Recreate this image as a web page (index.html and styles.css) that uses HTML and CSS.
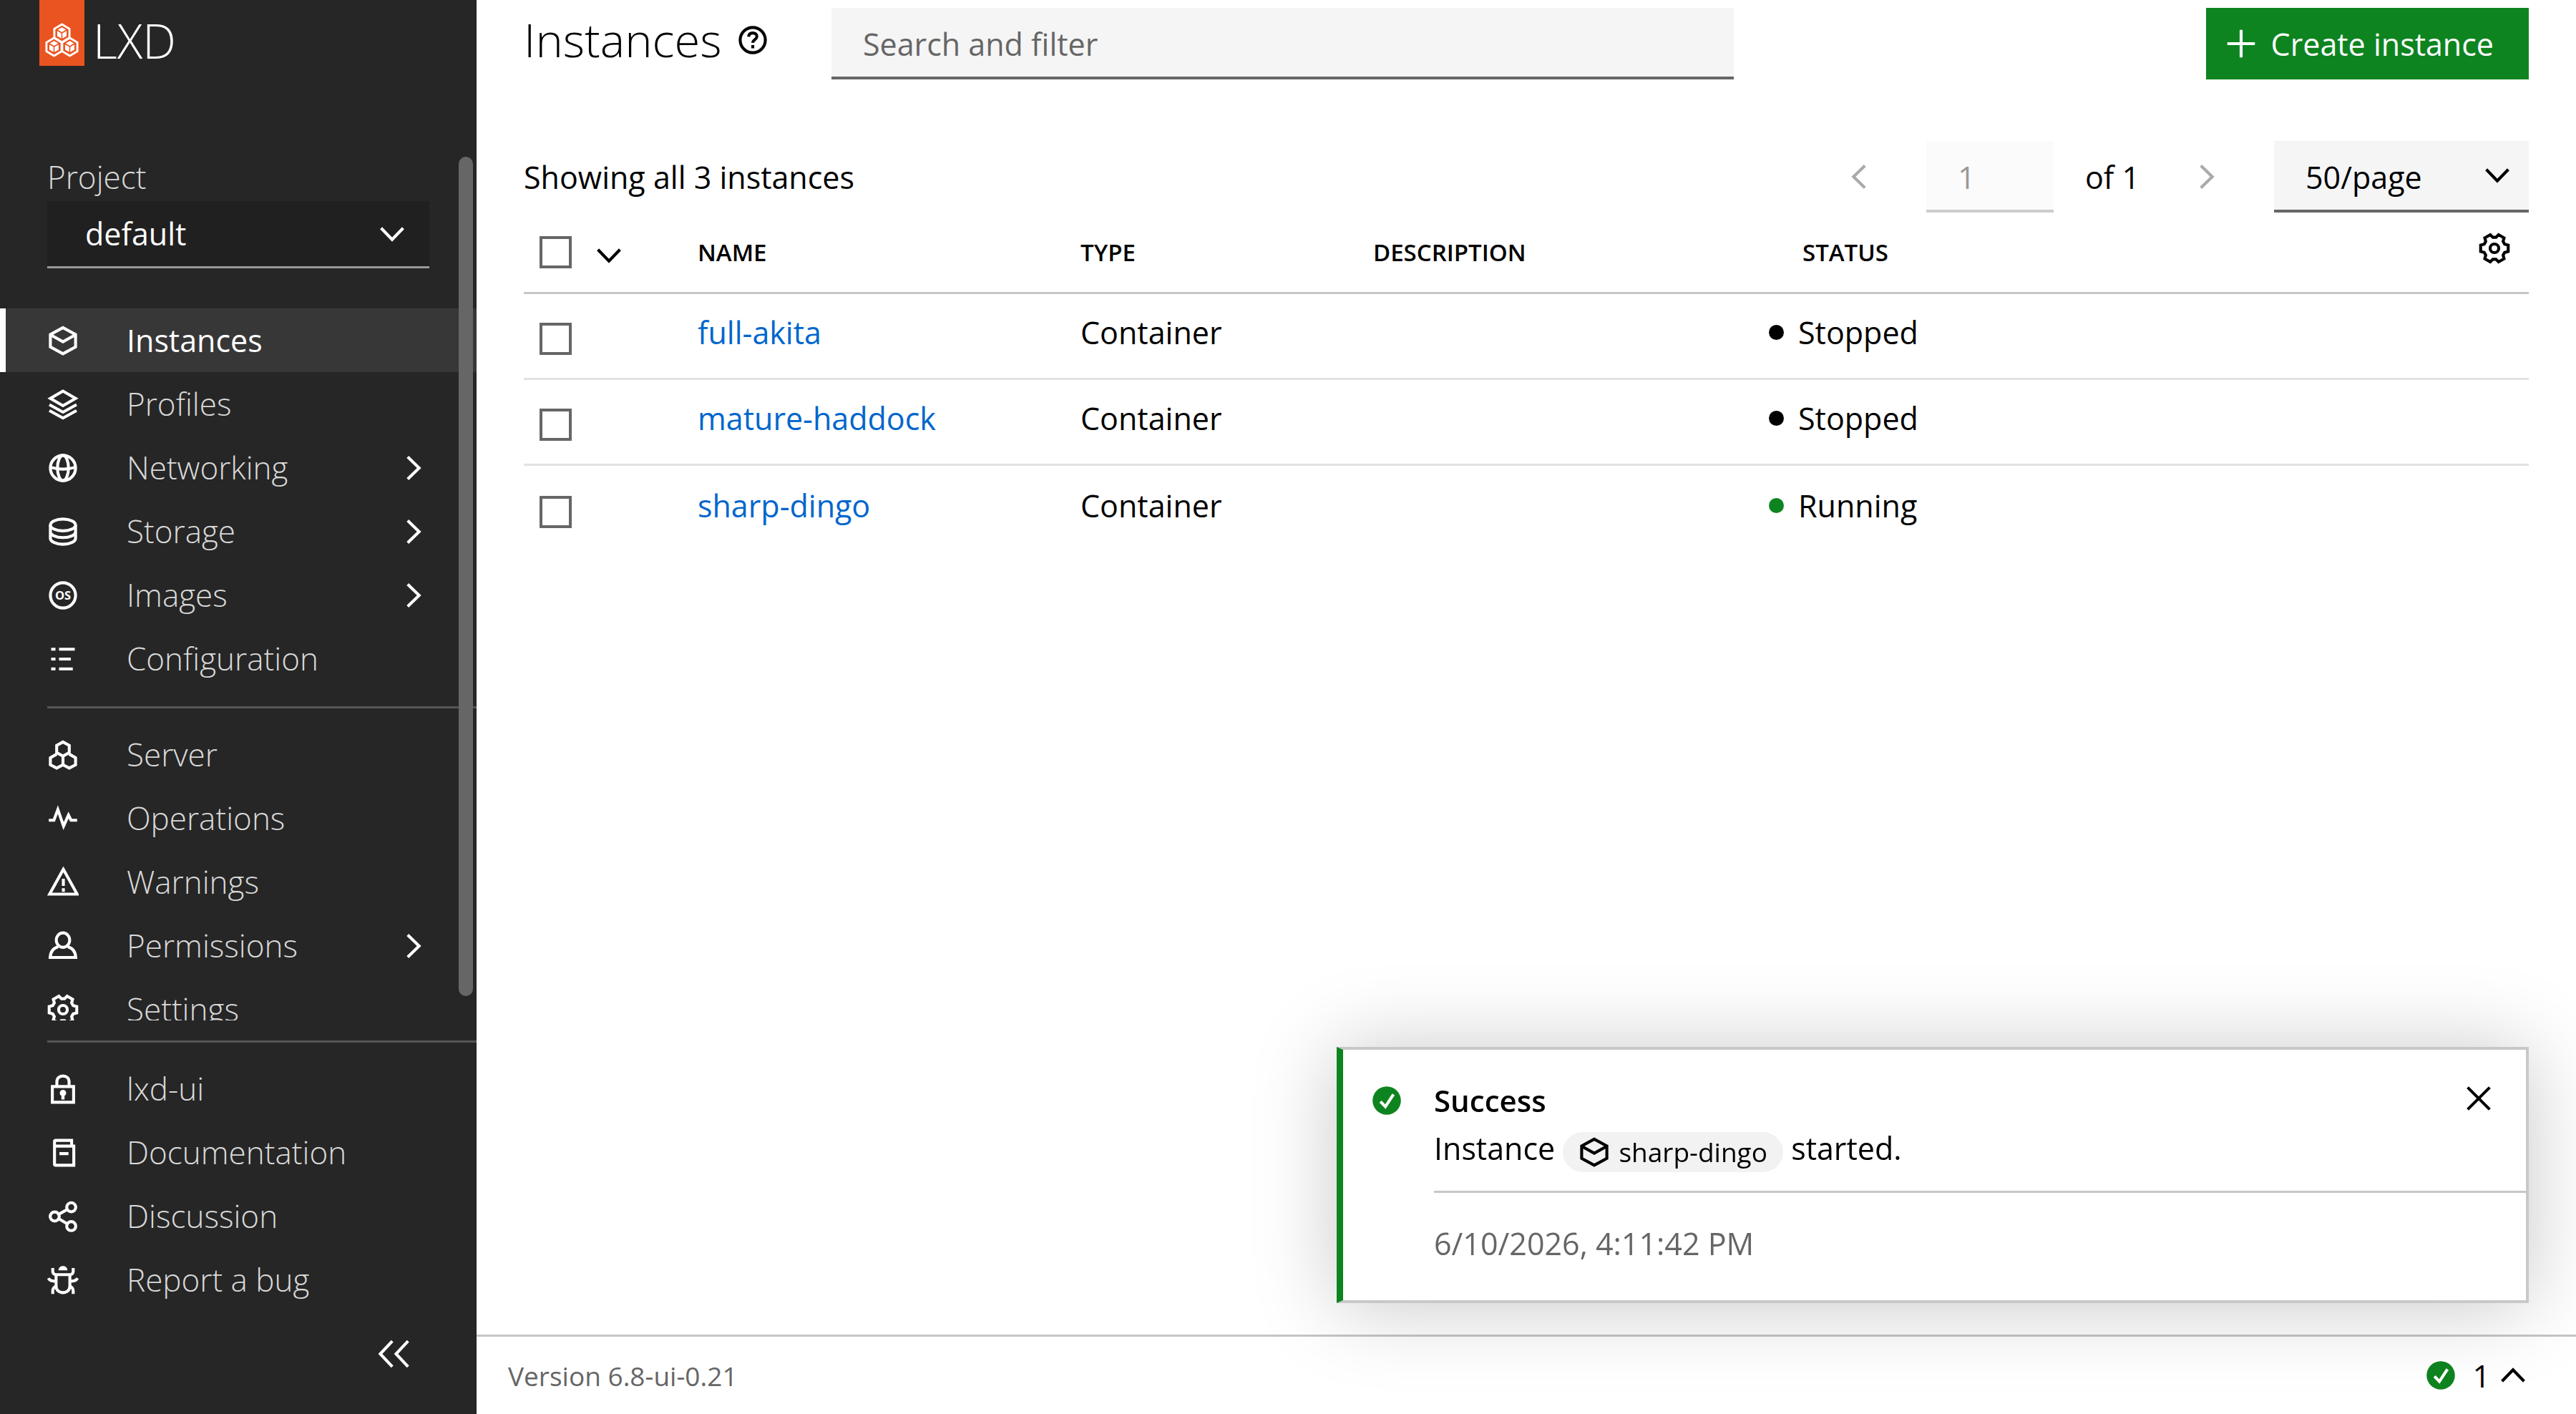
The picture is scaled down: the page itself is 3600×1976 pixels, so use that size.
FILE: index.html
```html
<!DOCTYPE html>
<html lang="en">
<head>
    <meta charset="UTF-8" />
    <meta name="viewport" content="width=device-width, initial-scale=1" />
    <title>Instances | LXD UI</title>
    <link rel="stylesheet" href="styles.css">
</head>
<body>

<!-- Icon set -->
<svg class="sprite" aria-hidden="true">
    <symbol id="i-cube" viewBox="0 0 16 16"><path d="M8 1.4 1.6 4.9v6.3L8 14.7l6.4-3.5V4.9zM1.6 5 8 8.6 14.4 5" /></symbol>
    <symbol id="i-layers" viewBox="0 0 16 16"><path d="M8 1.3 1.6 5 8 8.7 14.4 5zM1.1 8.2 8 12l6.9-3.8M1.1 11.2 8 15l6.9-3.8" /></symbol>
    <symbol id="i-globe" viewBox="0 0 16 16"><circle cx="8" cy="8" r="6.4" /><ellipse cx="8" cy="8" rx="2.8" ry="6.4" /><path d="M1.6 7.6q6.4 2 12.8 0" /></symbol>
    <symbol id="i-storage" viewBox="0 0 16 16"><ellipse cx="8" cy="4.6" rx="6.4" ry="3" /><path d="M1.6 4.6v6.8c0 1.7 2.9 3 6.4 3s6.4-1.3 6.4-3V4.6M1.6 8c0 1.7 2.9 3 6.4 3s6.4-1.3 6.4-3" /></symbol>
    <symbol id="i-list" viewBox="0 0 16 16"><path d="M2 3h2.2M6 3h8M2 8h2.2M6 8h6M2 13h2.2M6 13h7" /></symbol>
    <symbol id="i-hexes" viewBox="0 0 16 16"><path d="M8 1.4 4.8 3.2v3.6L8 8.6l3.2-1.8V3.2zM4.8 7.6 1.6 9.4V13l3.2 1.7L8 13V9.2M11.2 7.6l3.2 1.8V13l-3.2 1.7L8 13" /></symbol>
    <symbol id="i-pulse" viewBox="0 0 16 16"><path d="M.8 8.8h2.6l2-5.4 2.9 8.4 2.5-5.6 1.3 2.6h3.1" /></symbol>
    <symbol id="i-warning" viewBox="0 0 16 16"><path d="M8.2 1.4 1.2 14h14zM8.2 6.2v3.6M8.2 11v1.8" /></symbol>
    <symbol id="i-user" viewBox="0 0 16 16"><ellipse cx="8" cy="5" rx="3.4" ry="3.7" /><path d="M5.6 8.4C3.2 9 1.7 11 1.5 13.8h13c-.2-2.8-1.7-4.8-4.1-5.4" /></symbol>
    <symbol id="i-gear" viewBox="0 0 16 16"><path d="M15 9.6l-1.8.5-.8 1.4.5 1.8-2.8 1.6-1.3-1.3H7.2l-1.3 1.3-2.8-1.6.5-1.8-.8-1.4L1 9.6V6.4l1.8-.5.8-1.4-.5-1.8 2.8-1.6 1.3 1.3h1.6l1.3-1.3 2.8 1.6-.5 1.8.8 1.4 1.8.5z" /><circle cx="8" cy="8" r="2.2" /></symbol>
    <symbol id="i-lock" viewBox="0 0 16 16"><path d="M2.6 6.7h10.8v8H2.6zM4.9 6.700V4.3C4.9 2.4 6.2 1.3 8 1.3s3.1 1.1 3.1 3v2.4" /><path class="solid" d="M8 8.4a1.6 1.6 0 0 0-.8 3v1.9h1.6v-1.9a1.6 1.6 0 0 0-.8-3z" /></symbol>
    <symbol id="i-book" viewBox="0 0 16 16"><path d="M12.4 4V1.7H4.3c-.4 0-.6.2-.6.6v11.4c0 .4.2.6.6.6h9.2V4.6H3.7M6.2 8.4h4.6" /></symbol>
    <symbol id="i-share" viewBox="0 0 16 16"><circle cx="3.8" cy="8" r="2.3" /><circle cx="12.2" cy="3.3" r="2.3" /><circle cx="12.2" cy="12.9" r="2.3" /><path d="m5.8 6.900 4.4-2.5M5.8 9.1l4.4 2.6" /></symbol>
    <symbol id="i-bug" viewBox="0 0 16 16"><path d="M4.5 5.2h7v5.6c0 2.2-1.4 3.5-3.5 3.5s-3.5-1.3-3.5-3.5zM2.8 1.8v1.6c0 1 .6 1.8 1.7 1.8M13.2 1.8v1.6c0 1-.6 1.8-1.7 1.8M.6 7c.6 1.2 1.8 1.6 3.9 1.6M15.4 7c-.6 1.2-1.8 1.6-3.9 1.6M2.8 15v-1.6c0-1.2.5-1.8 1.7-2.4M13.2 15v-1.6c0-1.2-.5-1.8-1.7-2.4" /><path class="solid" d="M5.7 3C5.8 1.5 6.8.8 8 .8s2.2.7 2.3 2.2z" /></symbol>
    <symbol id="i-help" viewBox="0 0 16 16"><circle cx="8" cy="8" r="6.4" /><path d="M5.9 6.3C6 5 6.8 4.4 8 4.4s2.1.7 2.1 1.8c0 1.5-2.1 1.6-2.1 3.2M8 10.5v1.7" /></symbol>
    <symbol id="i-check" viewBox="0 0 16 16"><circle class="disc" cx="8" cy="8" r="7.2" /><path class="tick" d="m4.8 8.5 2.5 2.6 4.1-6.2" /></symbol>
    <symbol id="i-down" viewBox="0 0 16 16"><path d="m2.4 5 5.6 5.8L13.6 5" /></symbol>
    <symbol id="i-up" viewBox="0 0 16 16"><path d="M2.4 11 8 5.2l5.6 5.8" /></symbol>
    <symbol id="i-right" viewBox="0 0 16 16"><path d="M5 2.4 10.8 8 5 13.6" /></symbol>
    <symbol id="i-left" viewBox="0 0 16 16"><path d="M11 2.4 5.2 8l5.8 5.6" /></symbol>
    <symbol id="i-collapse" viewBox="0 0 16 16"><path d="M7 1.5.9 8 7 14.5M15 1.5 8.9 8l6.1 6.5" /></symbol>
    <symbol id="i-plus" viewBox="0 0 16 16"><path d="M8 1v14M1 8h14" /></symbol>
    <symbol id="i-close" viewBox="0 0 16 16"><path d="m2.4 2.4 11.2 11.2M13.6 2.4 2.4 13.6" /></symbol>
    <symbol id="i-hexcube" viewBox="0 0 26 30"><path class="logo-ring" d="M13 2 2 8.5v13L13 28l11-6.5v-13z" /><path class="logo-face" d="m13 6.4 6 3.5-6 3.5-6-3.5zM6.2 11.6l6 3.5v7.5l-6-3.5zM19.8 11.6l-6 3.5v7.5l6-3.5z" /></symbol>
</svg>

<div class="app">
    <aside class="sidebar">
        <a class="logo" href="#">
            <svg class="logo-tag" viewBox="0 0 63 92">
                <rect width="63" height="92" />
                <use href="#i-hexcube" x="19" y="32" width="25" height="29" />
                <use href="#i-hexcube" x="8" y="51" width="25" height="29" />
                <use href="#i-hexcube" x="30" y="51" width="25" height="29" />
            </svg>
            <span>LXD</span>
        </a>

        <div class="nav-scroll">
            <label class="project-label" for="project">Project</label>
            <div class="select project-select">
                <select id="project"><option>default</option></select>
                <svg class="icon"><use href="#i-down" /></svg>
            </div>
            <nav>
                <ul class="nav-list">
                    <li><a class="active" href="#"><svg class="icon"><use href="#i-cube" /></svg>Instances</a></li>
                    <li><a href="#"><svg class="icon"><use href="#i-layers" /></svg>Profiles</a></li>
                    <li><a href="#"><svg class="icon"><use href="#i-globe" /></svg>Networking<svg class="icon chevron"><use href="#i-right" /></svg></a></li>
                    <li><a href="#"><svg class="icon"><use href="#i-storage" /></svg>Storage<svg class="icon chevron"><use href="#i-right" /></svg></a></li>
                    <li><a href="#"><svg class="icon" viewBox="0 0 16 16"><circle cx="8" cy="8" r="6.4" /><text x="8" y="10.3" class="os-text">OS</text></svg>Images<svg class="icon chevron"><use href="#i-right" /></svg></a></li>
                    <li><a href="#"><svg class="icon"><use href="#i-list" /></svg>Configuration</a></li>
                </ul>
                <ul class="nav-list divided">
                    <li><a href="#"><svg class="icon"><use href="#i-hexes" /></svg>Server</a></li>
                    <li><a href="#"><svg class="icon"><use href="#i-pulse" /></svg>Operations</a></li>
                    <li><a href="#"><svg class="icon"><use href="#i-warning" /></svg>Warnings</a></li>
                    <li><a href="#"><svg class="icon"><use href="#i-user" /></svg>Permissions<svg class="icon chevron"><use href="#i-right" /></svg></a></li>
                    <li><a href="#"><svg class="icon"><use href="#i-gear" /></svg>Settings</a></li>
                </ul>
            </nav>
            <div class="scroll-thumb"></div>
        </div>

        <ul class="nav-list divided">
            <li><a href="#"><svg class="icon"><use href="#i-lock" /></svg>lxd-ui</a></li>
            <li><a href="#"><svg class="icon"><use href="#i-book" /></svg>Documentation</a></li>
            <li><a href="#"><svg class="icon"><use href="#i-share" /></svg>Discussion</a></li>
            <li><a href="#"><svg class="icon"><use href="#i-bug" /></svg>Report a bug</a></li>
        </ul>
        <div class="collapse">
            <button type="button" aria-label="Collapse main navigation"><svg class="icon"><use href="#i-collapse" /></svg></button>
        </div>
    </aside>

    <div class="page">
        <header class="page-header">
            <div class="page-title">
                <h1>Instances</h1>
                <a href="#" aria-label="Help"><svg class="icon"><use href="#i-help" /></svg></a>
            </div>
            <input class="search" type="search" placeholder="Search and filter" aria-label="Search and filter">
            <button class="create" type="button"><svg class="icon"><use href="#i-plus" /></svg>Create instance</button>
        </header>

        <main>
            <div class="toolbar">
                <span class="count">Showing all 3 instances</span>
                <button class="pager" type="button" aria-label="Previous page" disabled><svg class="icon"><use href="#i-left" /></svg></button>
                <input class="page-number" id="page-number" type="text" value="1" disabled>
                <label for="page-number">of 1</label>
                <button class="pager" type="button" aria-label="Next page" disabled><svg class="icon"><use href="#i-right" /></svg></button>
                <div class="select page-size">
                    <select aria-label="Items per page"><option>50/page</option></select>
                    <svg class="icon"><use href="#i-down" /></svg>
                </div>
            </div>

            <table>
                <thead>
                    <tr>
                        <th class="col-check">
                            <div class="check-all">
                                <input type="checkbox" aria-label="Select all">
                                <button type="button" aria-label="Selection options"><svg class="icon"><use href="#i-down" /></svg></button>
                            </div>
                        </th>
                        <th class="col-name">NAME</th>
                        <th class="col-type">TYPE</th>
                        <th class="col-description">DESCRIPTION</th>
                        <th class="col-status">STATUS</th>
                        <th class="col-actions"><button type="button" aria-label="Columns"><svg class="icon"><use href="#i-gear" /></svg></button></th>
                    </tr>
                </thead>
                <tbody>
                    <tr>
                        <td class="col-check"><input type="checkbox" aria-label="Select full-akita"></td>
                        <td><a href="#">full-akita</a></td>
                        <td>Container</td>
                        <td></td>
                        <td><span class="status">Stopped</span></td>
                        <td></td>
                    </tr>
                    <tr>
                        <td class="col-check"><input type="checkbox" aria-label="Select mature-haddock"></td>
                        <td><a href="#">mature-haddock</a></td>
                        <td>Container</td>
                        <td></td>
                        <td><span class="status">Stopped</span></td>
                        <td></td>
                    </tr>
                    <tr>
                        <td class="col-check"><input type="checkbox" aria-label="Select sharp-dingo"></td>
                        <td><a href="#">sharp-dingo</a></td>
                        <td>Container</td>
                        <td></td>
                        <td><span class="status running">Running</span></td>
                        <td></td>
                    </tr>
                </tbody>
            </table>
        </main>

        <footer class="status-bar">
            <span class="version">Version 6.8-ui-0.21</span>
            <button type="button" aria-label="Notifications">
                <svg class="icon"><use href="#i-check" /></svg>
                <span>1</span>
                <svg class="icon"><use href="#i-up" /></svg>
            </button>
        </footer>
    </div>
</div>

<div class="toast" role="status">
    <svg class="icon toast-icon"><use href="#i-check" /></svg>
    <div class="toast-body">
        <h2>Success</h2>
        <p>Instance <a class="chip" href="#"><svg class="icon"><use href="#i-cube" /></svg>sharp-dingo</a> started.</p>
        <time>6/10/2026, 4:11:42 PM</time>
    </div>
    <button class="toast-close" type="button" aria-label="Close"><svg class="icon"><use href="#i-close" /></svg></button>
</div>

</body>
</html>
```
FILE: styles.css
```css
* {
    box-sizing: border-box;
}
body {
    margin: 0;
    font-family: "Open Sans", "Noto Sans", sans-serif;
    font-size: 43px;
    line-height: 67px;
    color: #000;
    background-color: #fff;
}
ul, h1, h2, p {
    margin: 0;
    padding: 0;
}
button, input, select {
    font: inherit;
    color: inherit;
    margin: 0;
    padding: 0;
    border: 0;
    border-radius: 0;
    background: none;
}
a {
    color: #0066cc;
    text-decoration: none;
}
button {
    display: flex;
    align-items: center;
    cursor: pointer;
}

/* Icons */
.sprite {
    position: absolute;
    width: 0;
    height: 0;
}
.icon {
    flex: none;
    width: 44px;
    height: 44px;
    fill: none;
    stroke: currentColor;
    stroke-width: 1.5;
}
.solid {
    fill: currentColor;
    stroke: none;
}
.os-text {
    font-size: 6px;
    font-weight: 700;
    text-anchor: middle;
    fill: currentColor;
    stroke: none;
}
.disc {
    fill: #0e8420;
    stroke: none;
}
.tick {
    stroke: #fff;
}

.app {
    display: grid;
    grid-template-columns: 666px 1fr;
    height: 100vh;
}

/* Sidebar */
.sidebar {
    display: flex;
    flex-direction: column;
    min-height: 0;
    color: #fff;
    background-color: #262626;
}
.logo {
    display: flex;
    flex: none;
    gap: 12px;
    height: 214px;
    padding-left: 55px;
    font-size: 66px;
    font-weight: 300;
    line-height: 112px;
    color: #fff;
}
.logo-tag {
    width: 63px;
    height: 92px;
    fill: #e95420;
}
.logo-ring {
    fill: none;
    stroke: #fff;
    stroke-width: 3;
}
.logo-face {
    fill: #fff;
}
.nav-scroll {
    position: relative;
    flex: 1;
    min-height: 0;
    margin-bottom: 28px;
    overflow: hidden;
}
.scroll-thumb {
    position: absolute;
    top: 5px;
    right: 5px;
    bottom: 34px;
    width: 20px;
    border-radius: 10px;
    background-color: #666;
}
.project-label {
    display: block;
    padding-left: 66px;
    font-size: 44px;
    font-weight: 300;
    color: #d9d9d9;
}
.select {
    display: grid;
    align-items: center;
}
.select select {
    grid-area: 1 / 1;
    width: 100%;
    height: 100%;
    appearance: none;
}
.select .icon {
    grid-area: 1 / 1;
    justify-self: end;
    pointer-events: none;
}
.project-select {
    width: 534px;
    height: 94px;
    margin: 0 0 56px 66px;
    border-bottom: 3px solid #999;
    background-color: #202020;
}
.project-select select {
    padding-left: 53px;
}
.project-select .icon {
    margin-right: 30px;
}
.nav-list {
    list-style: none;
}
.nav-list a {
    display: flex;
    align-items: center;
    height: 89px;
    padding-left: 66px;
    font-size: 44px;
    font-weight: 300;
    color: #d9d9d9;
}
.nav-list .icon {
    margin-right: 67px;
    color: #fff;
}
.nav-list .chevron {
    margin-left: auto;
    margin-right: 66px;
}
.nav-list .active {
    font-size: 43px;
    font-weight: 400;
    color: #fff;
    background-color: #373737;
    box-shadow: inset 8px 0 #fff;
}
.divided::before {
    content: "";
    display: block;
    height: 3px;
    margin: 22px 0 20px 66px;
    background-color: #555;
}
.sidebar > .divided::before {
    margin-top: 0;
}
.collapse {
    display: flex;
    flex: none;
    justify-content: flex-end;
    height: 143px;
    padding: 0 93px 26px 0;
}

/* Page */
.page {
    display: flex;
    flex-direction: column;
    min-width: 0;
}
.page-header {
    display: flex;
    align-items: flex-end;
    height: 111px;
    padding: 0 66px;
}
.page-title {
    display: flex;
    flex: none;
    align-items: center;
    gap: 22px;
    width: 430px;
    height: 111px;
}
.page-title a {
    display: flex;
    color: #000;
}
h1 {
    font-size: 65px;
    font-weight: 300;
}
.search {
    flex: 0 1 1261px;
    height: 100px;
    padding: 4px 0 0 44px;
    border-bottom: 4px solid #666;
    background-color: #f5f5f5;
}
.search::placeholder {
    color: #666;
    opacity: 1;
}
.create {
    gap: 20px;
    height: 100px;
    margin-left: auto;
    padding: 0 49px 0 27px;
    color: #fff;
    background-color: #0e8420;
}
main {
    flex: 1;
    padding: 86px 66px 0;
}
.toolbar {
    display: flex;
    align-items: center;
    height: 100px;
}
.count {
    margin-right: auto;
}
.pager {
    justify-content: center;
    width: 100px;
    height: 100px;
    color: #aaa;
}
.page-number {
    width: 178px;
    height: 100px;
    margin: 0 44px;
    padding: 4px 0 0 44px;
    border-bottom: 4px solid #ccc;
    color: #999;
    background-color: #fbfbfb;
}
.toolbar label {
    width: 120px;
}
.page-size {
    width: 356px;
    height: 100px;
    margin-left: 44px;
    border-bottom: 4px solid #666;
    background-color: #f5f5f5;
}
.page-size select {
    padding: 4px 0 0 44px;
}
.page-size .icon {
    margin-right: 22px;
}

/* Instance table */
table {
    width: 100%;
    table-layout: fixed;
    border-collapse: separate;
    border-spacing: 0;
}
th, td {
    padding: 0 22px;
    text-align: left;
}
th {
    height: 114px;
    border-bottom: 3px solid #c6c6c6;
    font-size: 33px;
    font-weight: 600;
}
td {
    height: 120px;
    padding-bottom: 10px;
    border-bottom: 3px solid #e2e2e2;
}
tr:last-child td {
    border-bottom: 0;
}
td.col-check {
    padding-top: 8px;
    padding-bottom: 0;
}
.col-check {
    width: 221px;
}
.col-name {
    width: 535px;
}
.col-type {
    width: 409px;
}
.col-description {
    width: 553px;
}
th.col-status {
    padding-left: 69px;
}
.col-actions {
    width: 140px;
    padding-right: 26px;
    padding-bottom: 12px;
}
.col-actions button {
    margin-left: auto;
}
.check-all {
    display: flex;
    align-items: center;
    gap: 30px;
}
.check-all button {
    padding-top: 8px;
}
input[type="checkbox"] {
    display: block;
    width: 45px;
    height: 45px;
    border: 4px solid #666;
    appearance: none;
    background-color: #fff;
}
.status {
    display: flex;
    align-items: center;
    gap: 20px;
}
.status::before {
    content: "";
    width: 21px;
    height: 21px;
    border-radius: 50%;
    background-color: #000;
}
.running::before {
    background-color: #0e8420;
}

/* Status bar */
.status-bar {
    display: flex;
    align-items: center;
    justify-content: space-between;
    height: 111px;
    padding: 0 66px 0 44px;
    border-top: 3px solid #c6c6c6;
}
.version {
    font-size: 37px;
    color: #666;
}
.status-bar button {
    gap: 22px;
}
.status-bar button span {
    margin-right: -12px;
}

/* Notification */
.toast {
    position: fixed;
    right: 66px;
    bottom: 155px;
    display: grid;
    grid-template-columns: 88px 1fr;
    width: 1666px;
    height: 358px;
    padding: 37px 0 0 39px;
    border: 4px solid #c8c8c8;
    border-left: 9px solid #0e8420;
    background-color: #fff;
    box-shadow: 0 4px 110px rgba(0, 0, 0, 0.22);
}
.toast-icon {
    margin-top: 12px;
}
h2 {
    font-size: 42px;
    font-weight: 600;
}
.toast p {
    padding-bottom: 26px;
    border-bottom: 3px solid #c6c6c6;
}
.toast time {
    display: block;
    margin-top: 37px;
    color: #666;
}
.chip {
    display: inline-flex;
    align-items: center;
    gap: 12px;
    height: 56px;
    padding: 0 22px;
    border-radius: 28px;
    font-size: 37px;
    line-height: 56px;
    vertical-align: middle;
    color: #000;
    background-color: #f2f2f2;
}
.toast-close {
    position: absolute;
    top: 46px;
    right: 44px;
}
```
